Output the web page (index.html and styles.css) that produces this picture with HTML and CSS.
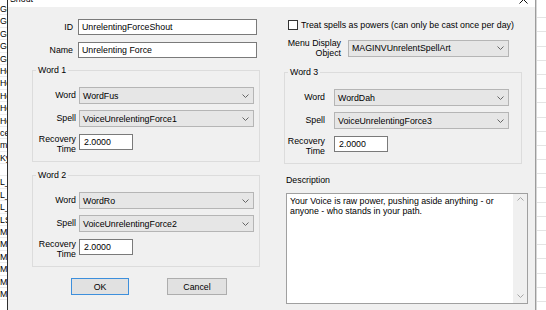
FILE: index.html
```html
<!DOCTYPE html>
<html lang="en">
<head>
    <meta charset="UTF-8">
    <meta name="viewport" content="width=device-width, initial-scale=1.0">
    <title>Shout</title>
    <link rel="stylesheet" href="styles.css">
</head>
<body>
    <div class="screen">
        <div class="list-left">
            <div class="list-row">Gr</div>
            <div class="list-row">Gr</div>
            <div class="list-row">Gr</div>
            <div class="list-row">Gr</div>
            <div class="list-row">Gr</div>
            <div class="list-row">Ho</div>
            <div class="list-row">Ho</div>
            <div class="list-row">Ho</div>
            <div class="list-row">Ho</div>
            <div class="list-row">Ho</div>
            <div class="list-row">ce</div>
            <div class="list-row">mp</div>
            <div class="list-row">Ky</div>
            <div class="list-row">&nbsp;</div>
            <div class="list-row">L_</div>
            <div class="list-row">L_</div>
            <div class="list-row">L_</div>
            <div class="list-row">LS</div>
            <div class="list-row">Ma</div>
            <div class="list-row">M0</div>
            <div class="list-row">M0</div>
            <div class="list-row">M0</div>
            <div class="list-row">M0</div>
            <div class="list-row">M0</div>
        </div>

        <div class="dialog">
            <div class="titlebar">
                <span class="title">Shout</span>
                <svg class="close" width="9" height="9" viewBox="0 0 9 9">
                    <path d="M0.5 0.5 L8.5 8.5 M8.5 0.5 L0.5 8.5" stroke="#111" stroke-width="1" fill="none"/>
                </svg>
            </div>

            <div class="dialog-body">
                <div class="col col-left">
                    <div class="field top-field">
                        <label>ID</label>
                        <div class="textbox wide">UnrelentingForceShout</div>
                    </div>
                    <div class="field top-field">
                        <label>Name</label>
                        <div class="textbox wide">Unrelenting Force</div>
                    </div>

                    <div class="group">
                        <div class="group-title">Word 1</div>
                        <div class="field">
                            <label>Word</label>
                            <div class="combo"><span>WordFus</span><svg width="7" height="4" viewBox="0 0 7 4"><polyline points="0.5,0.5 3.5,3.5 6.5,0.5" fill="none" stroke="#666"/></svg></div>
                        </div>
                        <div class="field">
                            <label>Spell</label>
                            <div class="combo"><span>VoiceUnrelentingForce1</span><svg width="7" height="4" viewBox="0 0 7 4"><polyline points="0.5,0.5 3.5,3.5 6.5,0.5" fill="none" stroke="#666"/></svg></div>
                        </div>
                        <div class="field field-top">
                            <label class="label-2">Recovery<br>Time</label>
                            <div class="textbox short">2.0000</div>
                        </div>
                    </div>

                    <div class="group group-second">
                        <div class="group-title">Word 2</div>
                        <div class="field">
                            <label>Word</label>
                            <div class="combo"><span>WordRo</span><svg width="7" height="4" viewBox="0 0 7 4"><polyline points="0.5,0.5 3.5,3.5 6.5,0.5" fill="none" stroke="#666"/></svg></div>
                        </div>
                        <div class="field">
                            <label>Spell</label>
                            <div class="combo"><span>VoiceUnrelentingForce2</span><svg width="7" height="4" viewBox="0 0 7 4"><polyline points="0.5,0.5 3.5,3.5 6.5,0.5" fill="none" stroke="#666"/></svg></div>
                        </div>
                        <div class="field field-top">
                            <label class="label-2">Recovery<br>Time</label>
                            <div class="textbox short">2.0000</div>
                        </div>
                    </div>

                    <div class="buttons">
                        <button class="btn btn-default">OK</button>
                        <button class="btn btn-cancel">Cancel</button>
                    </div>
                </div>

                <div class="col col-right">
                    <div class="check-row">
                        <span class="checkbox"></span>
                        <span>Treat spells as powers (can only be cast once per day)</span>
                    </div>
                    <div class="field menu-row">
                        <label class="label-2">Menu Display<br>Object</label>
                        <div class="combo combo-menu"><span>MAGINVUnrelentSpellArt</span><svg width="7" height="4" viewBox="0 0 7 4"><polyline points="0.5,0.5 3.5,3.5 6.5,0.5" fill="none" stroke="#666"/></svg></div>
                    </div>

                    <div class="group group-right">
                        <div class="group-title">Word 3</div>
                        <div class="field">
                            <label>Word</label>
                            <div class="combo"><span>WordDah</span><svg width="7" height="4" viewBox="0 0 7 4"><polyline points="0.5,0.5 3.5,3.5 6.5,0.5" fill="none" stroke="#666"/></svg></div>
                        </div>
                        <div class="field">
                            <label>Spell</label>
                            <div class="combo"><span>VoiceUnrelentingForce3</span><svg width="7" height="4" viewBox="0 0 7 4"><polyline points="0.5,0.5 3.5,3.5 6.5,0.5" fill="none" stroke="#666"/></svg></div>
                        </div>
                        <div class="field field-top">
                            <label class="label-2">Recovery<br>Time</label>
                            <div class="textbox short">2.0000</div>
                        </div>
                    </div>

                    <div class="desc-label">Description</div>
                    <div class="memo">
                        <div class="memo-text">Your Voice is raw power, pushing aside anything - or<br>anyone - who stands in your path.</div>
                        <div class="memo-scroll">
                            <svg width="7" height="4" viewBox="0 0 7 4"><polyline points="0.5,3.5 3.5,0.5 6.5,3.5" fill="none" stroke="#a6a6a6"/></svg>
                            <svg width="7" height="4" viewBox="0 0 7 4"><polyline points="0.5,0.5 3.5,3.5 6.5,0.5" fill="none" stroke="#a6a6a6"/></svg>
                        </div>
                    </div>
                </div>
            </div>
        </div>

        <div class="list-right">
            <div class="rline"></div>
            <div class="rline"></div>
            <div class="rline"></div>
            <div class="rline"></div>
            <div class="rline"></div>
            <div class="rline"></div>
            <div class="rline"></div>
            <div class="rline"></div>
            <div class="rline"></div>
            <div class="rline"></div>
            <div class="rline"></div>
            <div class="rline"></div>
            <div class="rline"></div>
            <div class="rline"></div>
            <div class="rline"></div>
            <div class="rline"></div>
            <div class="rline"></div>
            <div class="rline"></div>
            <div class="rline"></div>
            <div class="rline"></div>
            <div class="rline"></div>
            <div class="rline"></div>
        </div>
    </div>
</body>
</html>
```

FILE: styles.css
```css
body {
    margin: 0;
    font-family: "Liberation Sans", Arial, sans-serif;
    font-size: 8.8px;
    color: #000;
    background: #fff;
}
.screen {
    display: flex;
    width: 546px;
    height: 310px;
    overflow: hidden;
}

/* background list windows */
.list-left {
    width: 7px;
    flex: none;
    overflow: hidden;
    padding-top: 3px;
    box-sizing: border-box;
    white-space: nowrap;
    background: #fff;
}
.list-row {
    height: 12.4px;
    line-height: 12px;
    box-sizing: border-box;
    border-bottom: 1px solid #ececec;
}
.list-right {
    flex: 1;
    background: #fff;
    padding-top: 4px;
    overflow: hidden;
    border-left: 1px solid #d6d6d6;
}
.rline {
    height: 14.2px;
    box-sizing: border-box;
    border-bottom: 1px solid #e4e4e4;
}

/* dialog */
.dialog {
    width: 529px;
    flex: none;
    box-sizing: border-box;
    border-left: 1px solid #2e2e2e;
    border-right: 1px solid #9c9c9c;
    background: #f0f0f0;
    display: flex;
    flex-direction: column;
}
.titlebar {
    height: 7px;
    flex: none;
    background: #fff;
    display: flex;
    justify-content: space-between;
    overflow: hidden;
    padding: 0 7px 0 2px;
}
.title {
    margin-top: -7px;
    line-height: 12px;
}
.close {
    margin-top: -5px;
}
.dialog-body {
    display: flex;
    gap: 24px;
    padding: 12px 0 0 24px;
}
.col-left {
    width: 228px;
    flex: none;
}
.col-right {
    width: 244px;
    flex: none;
}

.field {
    display: flex;
    align-items: center;
}
.field label {
    flex: none;
    text-align: right;
    line-height: 11px;
}
.field-top {
    align-items: flex-start;
}
.label-2 {
    line-height: 10px !important;
}
.top-field label {
    width: 41px;
    margin-right: 5px;
}
.top-field + .top-field {
    margin-top: 7px;
}

.textbox {
    height: 16px;
    box-sizing: border-box;
    border: 1px solid #7a7a7a;
    background: #fff;
    padding-left: 4px;
    line-height: 14px;
    white-space: nowrap;
}
.textbox.wide {
    width: 179px;
    padding-left: 3px;
}
.textbox.short {
    width: 54px;
}

.combo {
    width: 175px;
    height: 17px;
    box-sizing: border-box;
    border: 1px solid #b5b5b5;
    background: #e6e6e6;
    display: flex;
    align-items: center;
    justify-content: space-between;
    padding: 0 4px 0 3px;
    white-space: nowrap;
}
.combo-menu {
    width: 161px;
}

/* group boxes */
.group {
    border: 1px solid #dcdcdc;
    margin-top: 12px;
    padding-bottom: 7px;
}
.group-second {
    margin-top: 13px;
}
.group-title {
    width: fit-content;
    margin: -6px 0 0 3px;
    padding: 0 2px;
    line-height: 11px;
    background: #f0f0f0;
}
.group .field {
    margin-top: 6px;
}
.group .group-title + .field {
    margin-top: 11px;
}
.group .field-top {
    margin-top: 7px;
}
.group .field label {
    width: 43px;
    margin-right: 3px;
}
.group-right {
    width: 238px;
    box-sizing: border-box;
    margin-top: 14px;
}
.group-right .field label {
    width: 40px;
    margin-right: 9px;
}

/* buttons */
.buttons {
    display: flex;
    gap: 38px;
    margin-top: 11px;
    padding-left: 39px;
}
.btn {
    height: 17px;
    width: 58px;
    padding: 0;
    box-sizing: border-box;
    border: 1px solid #adadad;
    background: #e1e1e1;
    font: inherit;
    color: #000;
}
.btn-default {
    border-color: #3d8fdc;
}
.btn-cancel {
    width: 60px;
}

/* right column */
.check-row {
    display: flex;
    align-items: center;
    height: 12px;
    padding-left: 4px;
    white-space: nowrap;
}
.checkbox {
    width: 10px;
    height: 10px;
    box-sizing: border-box;
    border: 1px solid #333;
    background: #fff;
    margin-right: 3px;
    flex: none;
}
.menu-row {
    margin-top: 7px;
}
.menu-row label {
    width: 57px;
    margin-right: 7px;
}
.desc-label {
    margin-top: 11px;
    padding-left: 2px;
    line-height: 11px;
}
.memo {
    display: flex;
    width: 242px;
    height: 111px;
    box-sizing: border-box;
    margin: 7px 0 0 2px;
    border: 1px solid #a0a0a0;
    background: #fff;
}
.memo-text {
    flex: 1;
    padding: 2px 3px;
    line-height: 10px;
    white-space: nowrap;
}
.memo-scroll {
    width: 14px;
    flex: none;
    background: #f0f0f0;
    display: flex;
    flex-direction: column;
    justify-content: space-between;
    align-items: center;
    padding: 3px 0 5px;
    box-sizing: border-box;
}
```
